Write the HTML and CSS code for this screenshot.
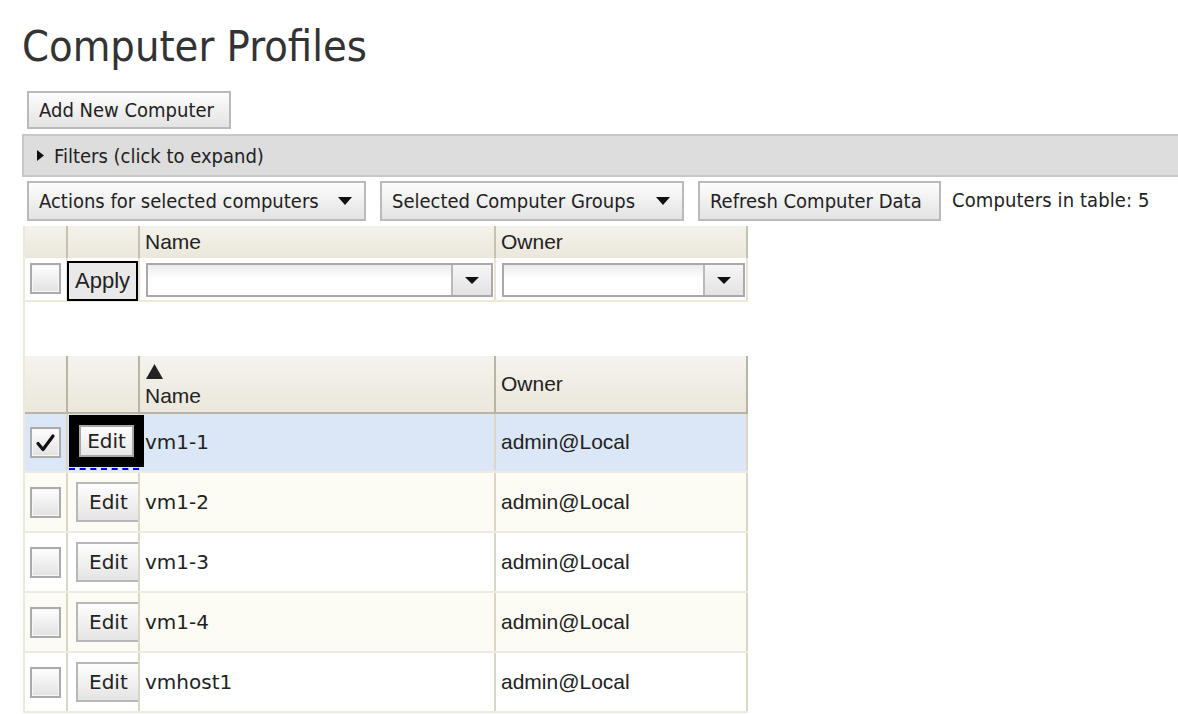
FILE: index.html
```html
<!DOCTYPE html>
<html>
<head>
<meta charset="utf-8">
<title>Computer Profiles</title>
<link rel="stylesheet" href="styles.css">
</head>
<body>
<h1 class="title">Computer Profiles</h1>
<div class="top-bar">
  <button class="btn btn-add">Add New Computer</button>
</div>
<div class="filters">
  <svg class="tri-right" width="7" height="11" viewBox="0 0 7 11"><polygon points="0,0 7,5.5 0,11" fill="#111"/></svg>
  <span>Filters (click to expand)</span>
</div>
<div class="actions">
  <button class="btn btn-actions"><span>Actions for selected computers</span><svg class="caret" width="14" height="8" viewBox="0 0 14 8"><polygon points="0,0 14,0 7,8" fill="#111"/></svg></button>
  <button class="btn btn-groups"><span>Selected Computer Groups</span><svg class="caret" width="14" height="8" viewBox="0 0 14 8"><polygon points="0,0 14,0 7,8" fill="#111"/></svg></button>
  <button class="btn btn-refresh">Refresh Computer Data</button>
  <span class="count">Computers in table: 5</span>
</div>

<div class="tables">
  <div class="row head1">
    <div class="cell"></div>
    <div class="cell"></div>
    <div class="cell hcell">Name</div>
    <div class="cell hcell">Owner</div>
  </div>
  <div class="row filterrow">
    <div class="cell"><div class="cb cb-filter"></div></div>
    <div class="cell c2"><button class="apply">Apply</button></div>
    <div class="cell"><div class="select sel-name"><div class="sel-arrow"><svg width="14" height="7" viewBox="0 0 14 7"><polygon points="0,0 14,0 7,7" fill="#111"/></svg></div></div></div>
    <div class="cell"><div class="select sel-owner"><div class="sel-arrow"><svg width="14" height="7" viewBox="0 0 14 7"><polygon points="0,0 14,0 7,7" fill="#111"/></svg></div></div></div>
  </div>
  <div class="spacer"></div>
  <div class="row head2">
    <div class="cell"></div>
    <div class="cell"></div>
    <div class="cell hcell sortcell"><svg class="sort" width="17" height="16" viewBox="0 0 17 16"><polygon points="8.5,1 17,16 0,16" fill="#222"/></svg><span class="sortlabel">Name</span></div>
    <div class="cell hcell">Owner</div>
  </div>
  <div class="row body sel">
    <div class="cell"><div class="cb"><svg width="27" height="27" viewBox="0 0 27 27"><path d="M6 14.5 L11 20.5 L21 7" fill="none" stroke="#111" stroke-width="3.2" stroke-linecap="round" stroke-linejoin="round"/></svg></div></div>
    <div class="cell c2 focuscell"><div class="focusbox"><div class="edit-in">Edit</div></div><div class="dashed"></div></div>
    <div class="cell name">vm1-1</div>
    <div class="cell owner">admin@Local</div>
  </div>
  <div class="row body alt">
    <div class="cell"><div class="cb"></div></div>
    <div class="cell c2"><button class="edit">Edit</button></div>
    <div class="cell name">vm1-2</div>
    <div class="cell owner">admin@Local</div>
  </div>
  <div class="row body">
    <div class="cell"><div class="cb"></div></div>
    <div class="cell c2"><button class="edit">Edit</button></div>
    <div class="cell name">vm1-3</div>
    <div class="cell owner">admin@Local</div>
  </div>
  <div class="row body alt">
    <div class="cell"><div class="cb"></div></div>
    <div class="cell c2"><button class="edit">Edit</button></div>
    <div class="cell name">vm1-4</div>
    <div class="cell owner">admin@Local</div>
  </div>
  <div class="row body last">
    <div class="cell"><div class="cb"></div></div>
    <div class="cell c2"><button class="edit">Edit</button></div>
    <div class="cell name">vmhost1</div>
    <div class="cell owner">admin@Local</div>
  </div>
</div>
</body>
</html>
```

FILE: styles.css
```css
* { box-sizing: border-box; }
html, body { margin: 0; padding: 0; background: #fff; overflow: hidden; }
body {
  padding: 20px 0 0 22px;
  font-family: "DejaVu Sans Condensed", "DejaVu Sans", sans-serif;
  color: #222;
}
.title {
  margin: 0;
  font-size: 43px;
  font-weight: normal;
  line-height: 50px;
  height: 50px;
  color: #333;
  padding-top: 1px;
}
.top-bar { margin-top: 21px; padding-left: 5px; display: flex; }
.btn {
  -webkit-appearance: none;
  appearance: none;
  font-family: "DejaVu Sans Condensed", "DejaVu Sans", sans-serif;
  font-size: 20px;
  color: #222;
  height: 40px;
  border: 2px solid #bababa;
  border-radius: 0;
  background: linear-gradient(#fdfdfd, #e3e3e3);
  padding: 0 10px;
  margin: 0;
  display: flex;
  align-items: center;
  white-space: nowrap;
}
.btn-add { height: 38px; width: 204px; }
.filters {
  margin-top: 5px;
  margin-right: -30px;
  height: 43px;
  background: #dddddd;
  border: 2px solid #c8c8c8;
  display: flex;
  align-items: center;
  padding-left: 13px;
  font-size: 20px;
  color: #222;
}
.tri-right { margin-right: 10px; }
.actions {
  margin-top: 4px;
  padding-left: 5px;
  display: flex;
  gap: 14px;
  align-items: flex-start;
}
.btn-actions { width: 339px; justify-content: space-between; padding-right: 12px; }
.btn-groups { width: 304px; justify-content: space-between; padding-right: 12px; }
.btn-refresh { width: 243px; }
.count {
  margin-left: -3px;
  font-size: 20px;
  line-height: 24px;
  margin-top: 7px;
  color: #222;
  white-space: nowrap;
  letter-spacing: 0.1px;
}

.tables {
  margin-top: 5px;
  margin-left: 1px;
  width: 725px;
  border-left: 2px solid #ece8dc;
}
.row {
  display: grid;
  grid-template-columns: 43px 72px 356px 252px;
}
.cell {
  display: flex;
  align-items: center;
  padding: 0 5px;
  border-right: 2px solid #dcd6c2;
  min-width: 0;
}
.hcell {
  font-family: "Liberation Sans", Arial, sans-serif;
  font-size: 21px;
  color: #222;
}
.head1 {
  height: 32px;
  background: linear-gradient(#f4f2eb, #ebe7dc);
}
.head1 .cell { border-right-color: #c6c1b1; }
.filterrow {
  height: 44px;
  background: #fff;
  border-bottom: 2px solid #ece8dc;
}
.filterrow .cell { align-items: flex-start; border-right-color: #e8e3d3; }
.cb {
  width: 31px;
  height: 31px;
  border: 2px solid #ababab;
  background: linear-gradient(#fefefe, #e2e2e2);
  box-shadow: inset 0 0 0 1px #f6f6f6;
  display: flex;
  align-items: center;
  justify-content: center;
  flex: none;
}
.cb-filter { margin-top: 5px; }
.c2 { padding: 0; }
.apply {
  -webkit-appearance: none;
  appearance: none;
  margin: 3px 0 0 -1px;
  width: 72px;
  height: 40px;
  border: 2px solid #000;
  border-radius: 0;
  background: #e9e9e9;
  font-family: "Liberation Sans", Arial, sans-serif;
  font-size: 22px;
  color: #222;
  padding: 0 0 0 6px;
  text-align: left;
}
.select {
  margin: 5px 0 0 1px;
  height: 34px;
  border: 2px solid #a9a9a9;
  background: linear-gradient(#ebebeb, #fff 45%);
  display: flex;
  justify-content: flex-end;
  flex: none;
}
.sel-name { width: 347px; }
.sel-owner { width: 243px; }
.sel-arrow {
  width: 40px;
  border-left: 2px solid #b9b9b9;
  background: linear-gradient(#f6f6f6, #e3e3e3);
  display: flex;
  align-items: center;
  justify-content: center;
}
.spacer { height: 54px; }
.head2 {
  height: 58px;
  background: linear-gradient(#f5f3ed, #ebe7dc);
  border-bottom: 2px solid #b9b4a4;
}
.head2 .cell { border-right-color: #b9b4a4; }
.sortcell {
  flex-direction: column;
  align-items: flex-start;
  justify-content: flex-start;
  padding-top: 7px;
}
.sort { display: block; margin-left: 1px; }
.sortlabel { display: block; line-height: 24px; margin-top: 5px; }
.body {
  height: 60px;
  background: #fff;
  border-top: 2px solid #edeae1;
}
.body.last { height: 62px; border-bottom: 2px solid #edeae1; }
.body.alt { background: #fdfcf4; }
.body.sel { height: 57px; background: #dbe7f6; border-top: none; padding-bottom: 2px; }
.name {
  font-family: "DejaVu Sans", sans-serif;
  font-size: 20px;
  color: #222;
}
.owner {
  font-family: "Liberation Sans", Arial, sans-serif;
  font-size: 21px;
  color: #222;
}
.edit {
  -webkit-appearance: none;
  appearance: none;
  margin: 0 0 0 8px;
  width: 62px;
  height: 40px;
  border: 2px solid #b8b8b8;
  border-right: none;
  border-radius: 0;
  background: linear-gradient(#fefefe, #e4e4e4);
  font-family: "DejaVu Sans", sans-serif;
  font-size: 20px;
  color: #222;
  padding: 0 0 0 11px;
  text-align: left;
}
.focuscell {
  flex-direction: column;
  align-items: flex-start;
  justify-content: flex-start;
  padding-top: 1px;
}
.focusbox {
  margin-left: 1px;
  width: 75px;
  height: 52px;
  background: #000;
  padding: 10px;
  flex: none;
}
.edit-in {
  width: 55px;
  height: 32px;
  border: 2px solid #a8a8a8;
  background: linear-gradient(#fefefe, #e6e6e6);
  font-family: "DejaVu Sans", sans-serif;
  font-size: 20px;
  color: #222;
  display: flex;
  align-items: center;
  justify-content: center;
}
.dashed {
  margin: 1px 0 0 1px;
  width: 70px;
  border-top: 2px dashed #0000ee;
}
```
